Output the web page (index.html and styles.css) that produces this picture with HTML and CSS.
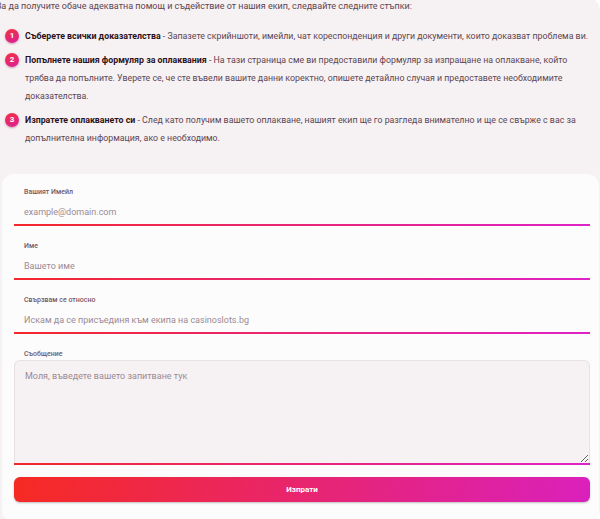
FILE: index.html
```html
<!DOCTYPE html>
<html lang="bg">
  <head>
    <meta charset="UTF-8" />
    <meta name="viewport" content="width=device-width, initial-scale=1.0" />
    <title>Контакт</title>

    <link rel="stylesheet" href="styles.css">
  </head>
  <body>
    <div class="panel">
      <p class="intro">За да получите обаче адекватна помощ и съдействие от нашия екип, следвайте следните стъпки:</p>

      <ol class="steps">
        <li>
          <span class="num">1</span>
          <p><b>Съберете всички доказателства</b> - Запазете скрийншоти, имейли, чат кореспонденция и други документи, които доказват проблема ви.</p>
        </li>
        <li>
          <span class="num">2</span>
          <p><b>Попълнете нашия формуляр за оплаквания</b> - На тази страница сме ви предоставили формуляр за изпращане на оплакване, който трябва да попълните. Уверете се, че сте въвели вашите данни коректно, опишете детайлно случая и предоставете необходимите доказателства.</p>
        </li>
        <li>
          <span class="num">3</span>
          <p><b>Изпратете оплакването си</b> - След като получим вашето оплакване, нашият екип ще го разгледа внимателно и ще се свърже с вас за допълнителна информация, ако е необходимо.</p>
        </li>
      </ol>

      <form class="card">
        <div class="field">
          <label for="email">Вашият Имейл</label>
          <input type="text" id="email" placeholder="example@domain.com">
          <div class="line"></div>
        </div>
        <div class="field">
          <label for="name">Име</label>
          <input type="text" id="name" placeholder="Вашето име">
          <div class="line"></div>
        </div>
        <div class="field">
          <label for="subject">Свързвам се относно</label>
          <input type="text" id="subject" placeholder="Искам да се присъединя към екипа на casinoslots.bg">
          <div class="line"></div>
        </div>
        <div class="field msg">
          <label for="message">Съобщение</label>
          <textarea id="message" placeholder="Моля, въведете вашето запитване тук"></textarea>
          <div class="line"></div>
        </div>
        <button class="btn" type="submit">Изпрати</button>
      </form>
    </div>
  </body>
</html>
```

FILE: styles.css
```css
body {
  margin: 0;
  background-color: #ffffff;
  font-family: Roboto, "Liberation Sans", sans-serif;
  color: #5d4552;
  overflow: hidden;
}

.panel {
  margin: -3px 0 0 -14px;
  width: 597px;
  padding: 0 1px 0 16px;
  background-color: #f6f1f2;
  border-radius: 14px;
}

.intro {
  margin: 0 0 11px -6px;
  font-size: 9px;
  line-height: 19px;
  white-space: nowrap;
}

.steps {
  list-style: none;
  margin: 0 9px 0 3px;
  padding: 0 0 21px 0;
}

.steps li {
  display: flex;
  gap: 6px;
  margin-bottom: 6px;
}

.steps p {
  margin: 0;
  font-size: 8.8px;
  line-height: 18px;
}

.steps b {
  color: #2d1120;
  font-weight: 700;
}

.num {
  flex: none;
  width: 14px;
  height: 14px;
  margin-top: 2px;
  border-radius: 50%;
  background-image: linear-gradient(160deg, #f5303a, #d91f9c);
  box-shadow: 0 1px 2px rgba(120, 0, 40, 0.35);
  color: #fff;
  font-size: 8px;
  font-weight: 700;
  line-height: 14px;
  text-align: center;
}

.card {
  padding: 12px 9px 20px 12px;
  background-color: #fdfcfd;
  border-radius: 12px;
}

.field {
  margin-bottom: 14px;
}

.field label {
  display: block;
  font-size: 7px;
  font-weight: 500;
  line-height: 12px;
  color: #735866;
  margin-left: 10px;
  margin-bottom: 2px;
}

.field input {
  display: block;
  box-sizing: border-box;
  width: 100%;
  height: 24px;
  padding: 0 10px;
  border: none;
  background: transparent;
  font-family: Roboto, "Liberation Sans", sans-serif;
  font-size: 9px;
  outline: none;
}

input::placeholder,
textarea::placeholder {
  color: #9b8a92;
}

.line {
  height: 2px;
  background-image: linear-gradient(90deg, #f3282b, #df22c6);
}

.msg {
  margin-bottom: 12px;
}

.msg label {
  margin-bottom: 0;
}

.msg textarea {
  display: block;
  box-sizing: border-box;
  width: 100%;
  height: 103px;
  padding: 10px 10px;
  border: 1px solid #e7e1e3;
  border-bottom: none;
  border-radius: 6px 6px 0 0;
  background-color: #f6f1f3;
  font-family: Roboto, "Liberation Sans", sans-serif;
  font-size: 9px;
  color: #5d4552;
  outline: none;
}

.btn {
  display: block;
  width: 100%;
  height: 25px;
  border: none;
  border-radius: 6px;
  background-image: linear-gradient(100deg, #f62a22, #da20bc);
  box-shadow: 0 1px 2px rgba(0, 0, 0, 0.25);
  color: #fff;
  font-family: Roboto, "Liberation Sans", sans-serif;
  font-size: 8px;
  font-weight: 700;
  cursor: pointer;
}
```
